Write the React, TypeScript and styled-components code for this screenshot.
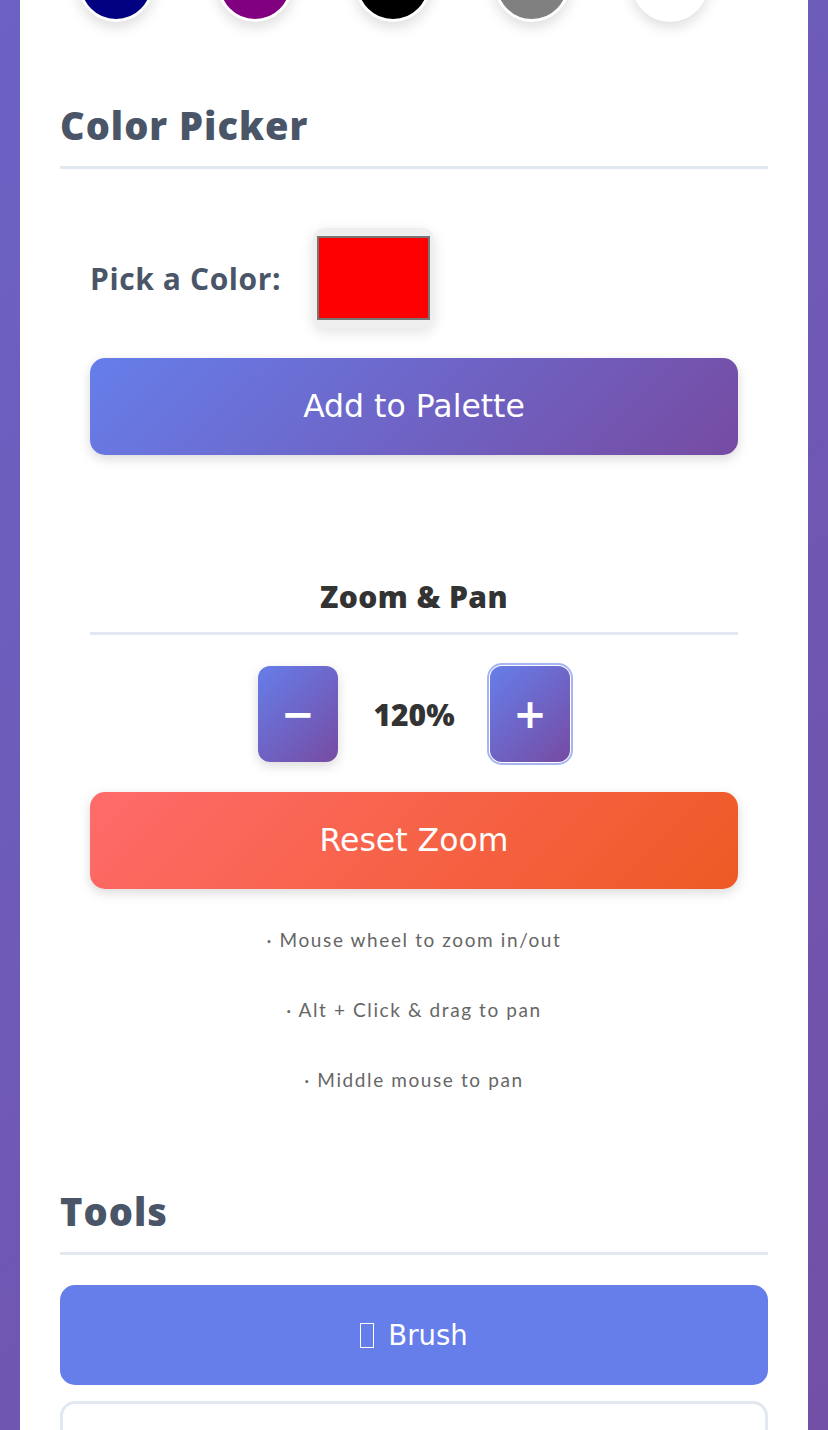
import React from "react";
import styled, { createGlobalStyle } from "styled-components";

const GlobalStyle = createGlobalStyle`
  html {
    overflow: hidden;
  }
  html, body {
    margin: 0;
    padding: 0;
  }
  body {
    min-height: 100vh;
    background: linear-gradient(135deg, #6b62c4 0%, #7250a6 100%);
    background-attachment: fixed;
    font-family: "Open Sans", sans-serif;
  }
  * {
    box-sizing: border-box;
  }
`;

const Page = styled.div`
  padding: 0 20px;
`;

// the view is scrolled: the palette row sits partly above the top edge
const Card = styled.main`
  background: #fff;
  margin-top: -54px;
  padding: 0 40px 40px;
`;

const Section = styled.section<{ $spaceAfter?: number }>`
  margin-bottom: ${(p) => p.$spaceAfter ?? 0}px;
`;

const PaletteGrid = styled.div`
  display: grid;
  grid-template-columns: repeat(5, 76px);
  column-gap: 62.5px;
  padding-left: 18px;
`;

const Swatch = styled.button<{ $color: string }>`
  width: 76px;
  height: 76px;
  padding: 0;
  border-radius: 50%;
  border: 3px solid #fff;
  background: ${(p) => p.$color};
  box-shadow: 0 5px 14px rgba(0, 0, 0, 0.14);
`;

const SectionTitle = styled.h2`
  margin: 0 0 30px;
  padding-bottom: 18px;
  border-bottom: 3px solid #e2e8f0;
  font-family: "Open Sans", sans-serif;
  font-size: 38px;
  line-height: 46px;
  font-weight: 800;
  letter-spacing: 1px;
  color: #4a5568;
`;

const PickerBlock = styled.div`
  display: flex;
  flex-direction: column;
  gap: 30px;
  padding: 29px 30px 0;
`;

const PickerRow = styled.div`
  display: flex;
  align-items: center;
  gap: 32px;
`;

const PickerLabel = styled.label`
  font-family: "Open Sans", sans-serif;
  font-size: 30px;
  font-weight: 700;
  letter-spacing: 0.6px;
  color: #4a5568;
`;

const ColorWell = styled.div`
  width: 121px;
  height: 100px;
  padding: 8px 4px;
  background: #efefef;
  border-radius: 12px;
  box-shadow: 0 4px 14px rgba(0, 0, 0, 0.12);
`;

const ColorSample = styled.div<{ $color: string }>`
  height: 100%;
  border: 2px solid #767676;
  background: ${(p) => p.$color};
`;

const gradients = {
  primary: "linear-gradient(135deg, #667eea 0%, #764ba2 100%)",
  danger: "linear-gradient(135deg, #ff6b6b 0%, #ee5a24 100%)",
};

const WideButton = styled.button<{ $variant: keyof typeof gradients }>`
  width: 100%;
  padding: 30px;
  border: none;
  border-radius: 15px;
  background: ${(p) => gradients[p.$variant]};
  color: #fff;
  font-family: "DejaVu Sans", sans-serif;
  font-size: 31.5px;
  line-height: 37px;
  box-shadow: 0 4px 12px rgba(0, 0, 0, 0.15);
`;

const ZoomPanel = styled.div`
  margin-top: 94px;
`;

const ZoomTitle = styled.h3`
  margin: 0 0 31px;
  padding-bottom: 17px;
  border-bottom: 3px solid #e2e8f0;
  text-align: center;
  font-family: "Open Sans", sans-serif;
  font-size: 30px;
  line-height: 36px;
  font-weight: 800;
  letter-spacing: 0.4px;
  color: #333;
`;

const ZoomControls = styled.div`
  display: flex;
  justify-content: center;
  align-items: center;
  gap: 30px;
  margin-bottom: 30px;
`;

const StepButton = styled.button<{ $focused?: boolean }>`
  width: 80px;
  height: 96px;
  padding: 0;
  border: none;
  border-radius: 12px;
  background: ${gradients.primary};
  color: #fff;
  font-family: "DejaVu Sans", sans-serif;
  font-size: 40px;
  font-weight: 700;
  line-height: 1;
  box-shadow: ${(p) =>
    p.$focused
      ? "0 0 0 1px #fff, 0 0 0 3px #a6b4f4"
      : "0 4px 12px rgba(0, 0, 0, 0.15)"};
`;

const ZoomValue = styled.span`
  min-width: 92px;
  text-align: center;
  font-family: "Open Sans", sans-serif;
  font-size: 30px;
  font-weight: 800;
  color: #333;
`;

const HelpList = styled.div`
  display: flex;
  flex-direction: column;
  gap: 40px;
  margin-top: 36px;
`;

const HelpLine = styled.p`
  margin: 0;
  text-align: center;
  font-family: Lato, sans-serif;
  font-size: 19px;
  line-height: 30px;
  letter-spacing: 1.6px;
  color: #666;
`;

const ToolList = styled.div`
  display: flex;
  flex-direction: column;
  gap: 16px;
`;

const ToolButton = styled.button<{ $active?: boolean }>`
  display: flex;
  justify-content: center;
  align-items: center;
  width: 100%;
  padding: 31px;
  border: 3px solid ${(p) => (p.$active ? "#667eea" : "#e2e8f0")};
  border-radius: 15px;
  background: ${(p) => (p.$active ? "#667eea" : "#fff")};
  color: ${(p) => (p.$active ? "#fff" : "#4a5568")};
  font-family: "DejaVu Sans", sans-serif;
  font-size: 27.5px;
  line-height: 32px;
`;

// the tool icon glyph has no font in the reference and shows as an empty box
const MissingGlyph = styled.span`
  display: inline-block;
  width: 14px;
  height: 25px;
  margin-right: 14px;
  border: 1.5px solid currentColor;
`;

const palette = ["#000080", "#800080", "#000000", "#808080", "#ffffff"];

const tools = [
  { id: "brush", label: "Brush" },
  { id: "eraser", label: "Eraser" },
  { id: "fill", label: "Fill" },
];

const helpLines = [
  "· Mouse wheel to zoom in/out",
  "· Alt + Click & drag to pan",
  "· Middle mouse to pan",
];

export default function App() {
  const pickedColor = "#ff0000";
  const zoom = 120;
  const activeTool = "brush";

  return (
    <>
      <GlobalStyle />
      <Page>
        <Card>
          <Section $spaceAfter={80}>
            <PaletteGrid>
              {palette.map((c) => (
                <Swatch key={c} $color={c} aria-label={c} />
              ))}
            </PaletteGrid>
          </Section>

          <Section $spaceAfter={93}>
            <SectionTitle>Color Picker</SectionTitle>
            <PickerBlock>
              <PickerRow>
                <PickerLabel>Pick a Color:</PickerLabel>
                <ColorWell>
                  <ColorSample $color={pickedColor} />
                </ColorWell>
              </PickerRow>
              <WideButton $variant="primary">Add to Palette</WideButton>

              <ZoomPanel>
                <ZoomTitle>Zoom &amp; Pan</ZoomTitle>
                <ZoomControls>
                  <StepButton>−</StepButton>
                  <ZoomValue>{zoom}%</ZoomValue>
                  <StepButton $focused>+</StepButton>
                </ZoomControls>
                <WideButton $variant="danger">Reset Zoom</WideButton>
                <HelpList>
                  {helpLines.map((line) => (
                    <HelpLine key={line}>{line}</HelpLine>
                  ))}
                </HelpList>
              </ZoomPanel>
            </PickerBlock>
          </Section>

          <Section>
            <SectionTitle>Tools</SectionTitle>
            <ToolList>
              {tools.map((t) => (
                <ToolButton key={t.id} $active={t.id === activeTool}>
                  <MissingGlyph aria-hidden />
                  {t.label}
                </ToolButton>
              ))}
            </ToolList>
          </Section>
        </Card>
      </Page>
    </>
  );
}
